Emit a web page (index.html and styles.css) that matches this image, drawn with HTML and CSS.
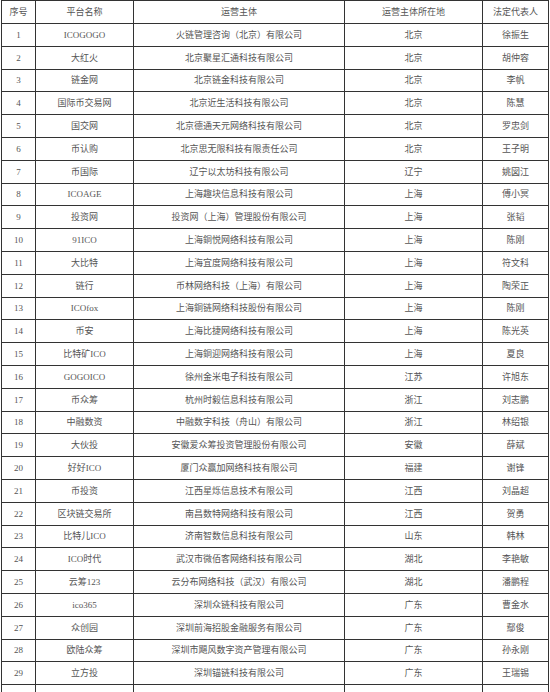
FILE: index.html
```html
<!DOCTYPE html>
<html lang="zh-CN">
<head>
<meta charset="utf-8">
<title>平台列表</title>
<link rel="stylesheet" href="styles.css">
</head>
<body>
<table class="list">
<colgroup>
<col class="c1"><col class="c2"><col class="c3"><col class="c4"><col class="c5">
</colgroup>
<thead>
<tr><th>序号</th><th>平台名称</th><th>运营主体</th><th>运营主体所在地</th><th>法定代表人</th></tr>
</thead>
<tbody>
<tr><td>1</td><td>ICOGOGO</td><td>火链管理咨询（北京）有限公司</td><td>北京</td><td>徐振生</td></tr>
<tr><td>2</td><td>大红火</td><td>北京聚星汇通科技有限公司</td><td>北京</td><td>胡仲容</td></tr>
<tr><td>3</td><td>链金网</td><td>北京链金科技有限公司</td><td>北京</td><td>李帆</td></tr>
<tr><td>4</td><td>国际币交易网</td><td>北京近生活科技有限公司</td><td>北京</td><td>陈慧</td></tr>
<tr><td>5</td><td>国交网</td><td>北京德通天元网络科技有限公司</td><td>北京</td><td>罗忠剑</td></tr>
<tr><td>6</td><td>币认购</td><td>北京思无限科技有限责任公司</td><td>北京</td><td>王子明</td></tr>
<tr><td>7</td><td>币国际</td><td>辽宁以太坊科技有限公司</td><td>辽宁</td><td>姚図江</td></tr>
<tr><td>8</td><td>ICOAGE</td><td>上海趣块信息科技有限公司</td><td>上海</td><td>傅小冥</td></tr>
<tr><td>9</td><td>投资网</td><td>投资网（上海）管理股份有限公司</td><td>上海</td><td>张韬</td></tr>
<tr><td>10</td><td>91ICO</td><td>上海銅悦网络科技有限公司</td><td>上海</td><td>陈刚</td></tr>
<tr><td>11</td><td>大比特</td><td>上海宜度网络科技有限公司</td><td>上海</td><td>符文科</td></tr>
<tr><td>12</td><td>链行</td><td>币林网络科技（上海）有限公司</td><td>上海</td><td>陶荣正</td></tr>
<tr><td>13</td><td>ICOfox</td><td>上海銅链网络科技股份有限公司</td><td>上海</td><td>陈刚</td></tr>
<tr><td>14</td><td>币安</td><td>上海比捷网络科技有限公司</td><td>上海</td><td>陈光英</td></tr>
<tr><td>15</td><td>比特矿ICO</td><td>上海銅迎网络科技有限公司</td><td>上海</td><td>夏良</td></tr>
<tr><td>16</td><td>GOGOICO</td><td>徐州金米电子科技有限公司</td><td>江苏</td><td>许旭东</td></tr>
<tr><td>17</td><td>币众筹</td><td>杭州时毅信息科技有限公司</td><td>浙江</td><td>刘志鹏</td></tr>
<tr><td>18</td><td>中融数资</td><td>中融数字科技（舟山）有限公司</td><td>浙江</td><td>林绍银</td></tr>
<tr><td>19</td><td>大伙投</td><td>安徽爱众筹投资管理股份有限公司</td><td>安徽</td><td>薛斌</td></tr>
<tr><td>20</td><td>好好ICO</td><td>厦门众赢加网络科技有限公司</td><td>福建</td><td>谢锋</td></tr>
<tr><td>21</td><td>币投资</td><td>江西星烁信息技术有限公司</td><td>江西</td><td>刘晶超</td></tr>
<tr><td>22</td><td>区块链交易所</td><td>南昌数特网络科技有限公司</td><td>江西</td><td>贺勇</td></tr>
<tr><td>23</td><td>比特儿ICO</td><td>济南智数信息科技有限公司</td><td>山东</td><td>韩林</td></tr>
<tr><td>24</td><td>ICO时代</td><td>武汉市微佰客网络科技有限公司</td><td>湖北</td><td>李艳敏</td></tr>
<tr><td>25</td><td>云筹123</td><td>云分布网络科技（武汉）有限公司</td><td>湖北</td><td>潘鹏程</td></tr>
<tr><td>26</td><td>ico365</td><td>深圳众链科技有限公司</td><td>广东</td><td>曹金水</td></tr>
<tr><td>27</td><td>众创园</td><td>深圳前海招股金融服务有限公司</td><td>广东</td><td>鄢俊</td></tr>
<tr><td>28</td><td>欧陆众筹</td><td>深圳市飓风数字资产管理有限公司</td><td>广东</td><td>孙永刚</td></tr>
<tr><td>29</td><td>立方投</td><td>深圳锚链科技有限公司</td><td>广东</td><td>王瑞锡</td></tr>
<tr class="stub"><td></td><td></td><td></td><td></td><td></td></tr>
</tbody>
</table>
</body>
</html>
```
FILE: styles.css
```css
html, body {
  margin: 0;
  padding: 0;
  background: #fff;
  overflow: hidden;
  height: 692px;
}
.list {
  margin: 0 0 0 1px;
  width: 547px;
  border-collapse: collapse;
  table-layout: fixed;
  font-family: "Liberation Serif", "Noto Sans CJK SC", serif;
  font-size: 9px;
  color: #555;
}
.c1 { width: 34px; }
.c2 { width: 98px; }
.c3 { width: 211px; }
.c4 { width: 138px; }
.c5 { width: 66px; }
.list th,
.list td {
  border: 1px solid #333;
  height: 21.8px;
  padding: 0;
  text-align: center;
  vertical-align: middle;
  font-weight: normal;
  white-space: nowrap;
  overflow: hidden;
  line-height: 12px;
}
.list th {
  height: 22px;
}
```
